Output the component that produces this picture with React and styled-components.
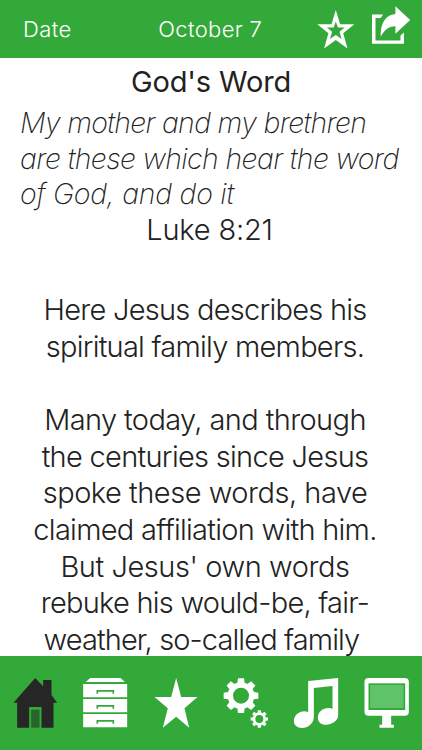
import React from 'react';
import styled, {createGlobalStyle} from 'styled-components';


const verse = [
    {text: 'My mother and my brethren', spacing: -0.7},
    {text: 'are these which hear the word', spacing: -0.62},
    {text: 'of God, and do it', spacing: -0.27},
];

const body = [
    {text: 'Here Jesus describes his', spacing: -0.74},
    {text: 'spiritual family members.', spacing: -0.75},
    {text: '', spacing: 0},
    {text: 'Many today, and through', spacing: -0.61},
    {text: 'the centuries since Jesus', spacing: -0.7},
    {text: 'spoke these words, have', spacing: -0.48},
    {text: 'claimed affiliation with him.', spacing: -0.72},
    {text: "But Jesus' own words", spacing: -0.43},
    {text: 'rebuke his would-be, fair-', spacing: -0.75},
    {text: 'weather, so-called family ', spacing: -0.88},
];

const angles = [0, 45, 90, 135, 180, 225, 270, 315];

const Gear = ({x, y, scale}) => (
    <g transform={`translate(${x} ${y}) scale(${scale})`}>
        <circle r="32" fill="none" stroke="#fff" strokeWidth="16" />
        {angles.map(angle => (
            <path key={angle} d="M-11 -38 L-9 -52 H9 L11 -38 Z" transform={`rotate(${angle})`} />
        ))}
    </g>
)

const App = () => {
    return (
        <Screen>
            <GlobalStyle />
            <Header>
                <DateLabel>Date</DateLabel>
                <Today>October 7</Today>
                <Actions>
                    <svg width="38" height="40" viewBox="316.5 9 38 40">
                        <path fillRule="evenodd" d="M335.3 10 L339.6 24.2 H353.8 L342.7 33.2 L347 48.4 L335.3 39.9 L323.6 48.4 L327.9 33.2 L316.8 24.2 H331 Z M335.3 21.5 L333.2 27.6 H326.4 L331.6 31.8 L329.5 39 L335.3 34.9 L341.1 39 L339 31.8 L344.2 27.6 H337.4 Z" />
                    </svg>
                    <svg width="39" height="40" viewBox="372 6 39 40">
                        <path d="M372 14.6 H383.2 L380.6 18 H375.5 V40.5 H400.5 V35.4 L404 32.4 V43.8 H372 Z" />
                        <path d="M395.4 6.2 L410.2 20 L395.4 33.8 V26.2 C388 26.3 384.2 30.5 380.7 36.8 C380 24 385.2 14.8 395.4 14 Z" />
                    </svg>
                </Actions>
            </Header>
            <Content>
                <Title>God's Word</Title>
                <Verse>
                    {verse.map((line, i) => <Line key={i} $spacing={line.spacing}>{line.text}</Line>)}
                </Verse>
                <Source>Luke 8:21</Source>
                <Body>
                    {body.map((line, i) => <Line key={i} $spacing={line.spacing}>{line.text}</Line>)}
                </Body>
            </Content>
            <TabBar>
                <Tab aria-label="Home" $active>
                    <TabIcon viewBox="39.5 69 132 150">
                        <path d="M106 69 L130 94 V75 H155 V120 L172 143 H161 V218 H125 V156 H88 V218 H52 V143 H41 Z" />
                        <path fill="#27652b" d="M94 164 H119 V218 H94 Z" />
                    </TabIcon>
                </Tab>
                <Tab aria-label="Archive">
                    <TabIcon viewBox="250.5 69 132 150">
                        <path d="M272 69 H363 L376 81 H259 Z" />
                        {[87, 132, 177].map(y => (
                            <g key={y}>
                                <path d={`M251 ${y} H383 V${y + 40} H251 Z`} />
                                <path d={`M293.5 ${y + 29} V${y + 20.5} H341.5 V${y + 29}`} fill="none" stroke="#33a93a" strokeWidth="5" />
                            </g>
                        ))}
                    </TabIcon>
                </Tab>
                <Tab aria-label="Favorites">
                    <TabIcon viewBox="41.5 69 132 150">
                        <path d="M108 69 L123 126 H172 L133 160 L147 218 L108 185 L68 218 L83 160 L43 126 H93 Z" />
                    </TabIcon>
                </Tab>
                <Tab aria-label="Settings">
                    <TabIcon viewBox="252.5 69 132 150">
                        <Gear x={303.5} y={122} scale={1} />
                        <Gear x={358.5} y={192} scale={0.5} />
                    </TabIcon>
                </Tab>
                <Tab aria-label="Music">
                    <TabIcon viewBox="43.5 69 132 150">
                        <path d="M86 78 L176 69 V180 C176 197 158 209 139 209 C125 209 115 201 115 188 C115 171 130 159 146 159 C151 159 156 160 159 162 V93 L103 99 V186 C103 205 86 219 67 219 C53 219 43 210 43 198 C43 182 58 169 74 169 C79 169 83 170 86 172 Z" />
                    </TabIcon>
                </Tab>
                <Tab aria-label="Display">
                    <TabIcon viewBox="254.5 69 132 150">
                        <rect x="253" y="69" width="133" height="113" rx="12" />
                        <rect x="265" y="85" width="110" height="80" fill="#33a93a" />
                        <rect x="270" y="90" width="100" height="69" fill="#5fc367" />
                        <path d="M306 180 H333 V209 H341 V218 H298 V209 H306 Z" />
                    </TabIcon>
                </Tab>
            </TabBar>
        </Screen>
    )
}

export default App;

const GlobalStyle = createGlobalStyle`
    body {
        margin: 0;
        background: #fff;
        font-family: Inter, "Liberation Sans", sans-serif;
    }
`;

//whole screen, bars at top and bottom

const Screen = styled.div`
    display: flex;
    flex-direction: column;
    height: 750px;
    color: #222;
    overflow: hidden;
`;

const Header = styled.header`
    display: grid;
    grid-template-columns: 126px 1fr 126px;
    align-items: center;
    flex: none;
    height: 58px;
    background: #33a93a;
    color: #fff;
    fill: #fff;
    font-size: 22px;
    font-weight: 300;
`;

const DateLabel = styled.span`
    padding-left: 23px;
    letter-spacing: 0.4px;
`;

const Today = styled.span`
    padding-right: 1.5px;
    text-align: center;
    letter-spacing: 0.35px;
`;

const Actions = styled.div`
    display: flex;
    align-items: flex-start;
    height: 49px;
    padding-left: 20.5px;
    gap: 17.5px;

    svg {
        flex: none;
    }
    svg:first-child {
        margin-top: 4.5px;
    }
    svg:last-child {
        margin-top: 1.5px;
    }
`;

//reading area

const Content = styled.main`
    flex: 1;
    min-height: 0;
    padding-top: 6px;
    overflow: hidden;
    font-size: 29px;
    font-weight: 300;
    line-height: 36.6px;
    text-align: center;
`;

const Title = styled.h1`
    margin: 0;
    font-size: 29px;
    font-weight: 400;
    letter-spacing: -0.15px;
`;

const Line = styled.div`
    min-height: 1lh;
    white-space: pre;
    letter-spacing: ${props => props.$spacing}px;
`;

const Verse = styled.div`
    margin-top: 4.5px;
    padding-left: 20px;
    font-size: 28.5px;
    font-style: italic;
    font-weight: 200;
    line-height: 35.6px;
    text-align: left;
`;

const Source = styled.div`
    padding-right: 3px;
    letter-spacing: -0.2px;
`;

const Body = styled.div`
    margin-top: 44px;
    padding-right: 12px;
`;

//bottom navigation

const TabBar = styled.nav`
    display: grid;
    grid-template-columns: repeat(6, 1fr);
    flex: none;
    height: 94px;
    background: #33a93a;
`;

const Tab = styled.button`
    display: flex;
    justify-content: center;
    padding: 22px 0 0;
    border: 0;
    background: none;
    fill: ${props => props.$active ? '#262626' : '#fff'};
`;

const TabIcon = styled.svg`
    width: 44px;
    height: 50px;
    overflow: visible;
`;
